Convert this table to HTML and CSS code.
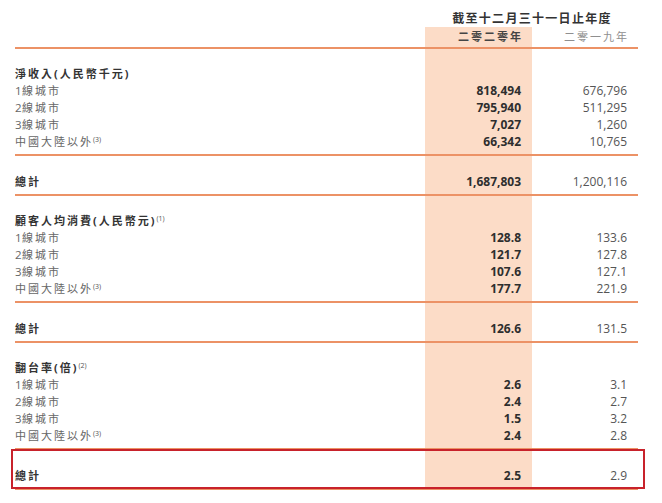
FILE: index.html
```html
<!DOCTYPE html>
<html lang="zh-Hant">
<head>
<meta charset="utf-8">
<title>營運數據</title>
<link rel="stylesheet" href="styles.css">
</head>
<body>
<div class="page">
  <div class="caption-row">
    <div></div>
    <div class="caption">截至十二月三十一日止年度</div>
  </div>
  <div class="table">
    <div class="row year-row">
      <div></div>
      <div class="year cur">二零二零年</div>
      <div class="year prev">二零一九年</div>
    </div>

    <div class="group">
      <div class="row"><div class="label head">淨收入(人民幣千元)</div></div>
      <div class="row"><div class="label"><span class="tier">1</span>線城市</div><div class="num cur">818,494</div><div class="num prev">676,796</div></div>
      <div class="row"><div class="label"><span class="tier">2</span>線城市</div><div class="num cur">795,940</div><div class="num prev">511,295</div></div>
      <div class="row"><div class="label"><span class="tier">3</span>線城市</div><div class="num cur">7,027</div><div class="num prev">1,260</div></div>
      <div class="row"><div class="label">中國大陸以外<sup>(3)</sup></div><div class="num cur">66,342</div><div class="num prev">10,765</div></div>
    </div>
    <div class="group total">
      <div class="row"><div class="label head">總計</div><div class="num cur">1,687,803</div><div class="num prev">1,200,116</div></div>
    </div>

    <div class="group">
      <div class="row"><div class="label head">顧客人均消費(人民幣元)<sup>(1)</sup></div></div>
      <div class="row"><div class="label"><span class="tier">1</span>線城市</div><div class="num cur">128.8</div><div class="num prev">133.6</div></div>
      <div class="row"><div class="label"><span class="tier">2</span>線城市</div><div class="num cur">121.7</div><div class="num prev">127.8</div></div>
      <div class="row"><div class="label"><span class="tier">3</span>線城市</div><div class="num cur">107.6</div><div class="num prev">127.1</div></div>
      <div class="row"><div class="label">中國大陸以外<sup>(3)</sup></div><div class="num cur">177.7</div><div class="num prev">221.9</div></div>
    </div>
    <div class="group total">
      <div class="row"><div class="label head">總計</div><div class="num cur">126.6</div><div class="num prev">131.5</div></div>
    </div>

    <div class="group">
      <div class="row"><div class="label head">翻台率(倍)<sup>(2)</sup></div></div>
      <div class="row"><div class="label"><span class="tier">1</span>線城市</div><div class="num cur">2.6</div><div class="num prev">3.1</div></div>
      <div class="row"><div class="label"><span class="tier">2</span>線城市</div><div class="num cur">2.4</div><div class="num prev">2.7</div></div>
      <div class="row"><div class="label"><span class="tier">3</span>線城市</div><div class="num cur">1.5</div><div class="num prev">3.2</div></div>
      <div class="row"><div class="label">中國大陸以外<sup>(3)</sup></div><div class="num cur">2.4</div><div class="num prev">2.8</div></div>
    </div>
    <div class="group total marked">
      <div class="row"><div class="label head">總計</div><div class="num cur">2.5</div><div class="num prev">2.9</div></div>
    </div>
  </div>
</div>
</body>
</html>
```

FILE: styles.css
```css
* { box-sizing: border-box; }

html, body {
  margin: 0;
  padding: 0;
  background: #ffffff;
}

body {
  font-family: "Open Sans", "Noto Sans CJK TC", sans-serif;
  color: #555555;
}

.page {
  width: 623px;
  margin-left: 15px;
}

.caption-row {
  display: grid;
  grid-template-columns: 410px 213px;
  height: 27px;
  padding-top: 9px;
}

.caption {
  text-align: center;
  font-family: "Noto Sans CJK TC", sans-serif;
  font-weight: 700;
  font-size: 12px;
  line-height: 17px;
  letter-spacing: 1.3px;
  color: #333333;
  padding-left: 1px;
}

.table {
  background: linear-gradient(90deg,
    transparent 410px,
    #fcdcc7 410px,
    #fcdcc7 517px,
    transparent 517px);
}

.row {
  display: grid;
  grid-template-columns: 410px 107px 106px;
  height: 17px;
  line-height: 17px;
}

.year-row {
  height: 22px;
  padding-top: 1px;
  border-bottom: 2px solid #ec9266;
}

.year {
  font-family: "Noto Sans CJK TC", sans-serif;
  font-size: 11px;
  letter-spacing: 2px;
  text-align: right;
  padding-right: 9px;
}

.year.cur {
  font-weight: 700;
  color: #444444;
}

.year.prev {
  color: #8f8f8f;
}

.group {
  padding-top: 16px;
  padding-bottom: 4px;
  border-bottom: 2px solid #ec9266;
}

.group.total {
  padding-top: 17px;
}

.label {
  font-family: "Open Sans", "Noto Sans CJK TC", sans-serif;
  font-size: 11px;
  letter-spacing: 2px;
  color: #666666;
  white-space: nowrap;
}

.label .tier {
  font-size: 11.5px;
  letter-spacing: 0.5px;
}

.label.head {
  font-weight: 700;
  color: #333333;
}

.label sup {
  font-size: 7px;
  letter-spacing: 0;
  vertical-align: 4px;
  line-height: 0;
  font-weight: 400;
  color: #555555;
}

.num {
  font-size: 12px;
  text-align: right;
  padding-right: 11px;
  white-space: nowrap;
}

.num.cur {
  font-weight: 700;
  color: #2e2e2e;
}

.num.prev {
  color: #555555;
}

.marked {
  position: relative;
}

.marked::after {
  content: "";
  position: absolute;
  left: -4px;
  right: -7px;
  top: -1px;
  bottom: -1px;
  border: 2px solid #c8222b;
  pointer-events: none;
}
```
